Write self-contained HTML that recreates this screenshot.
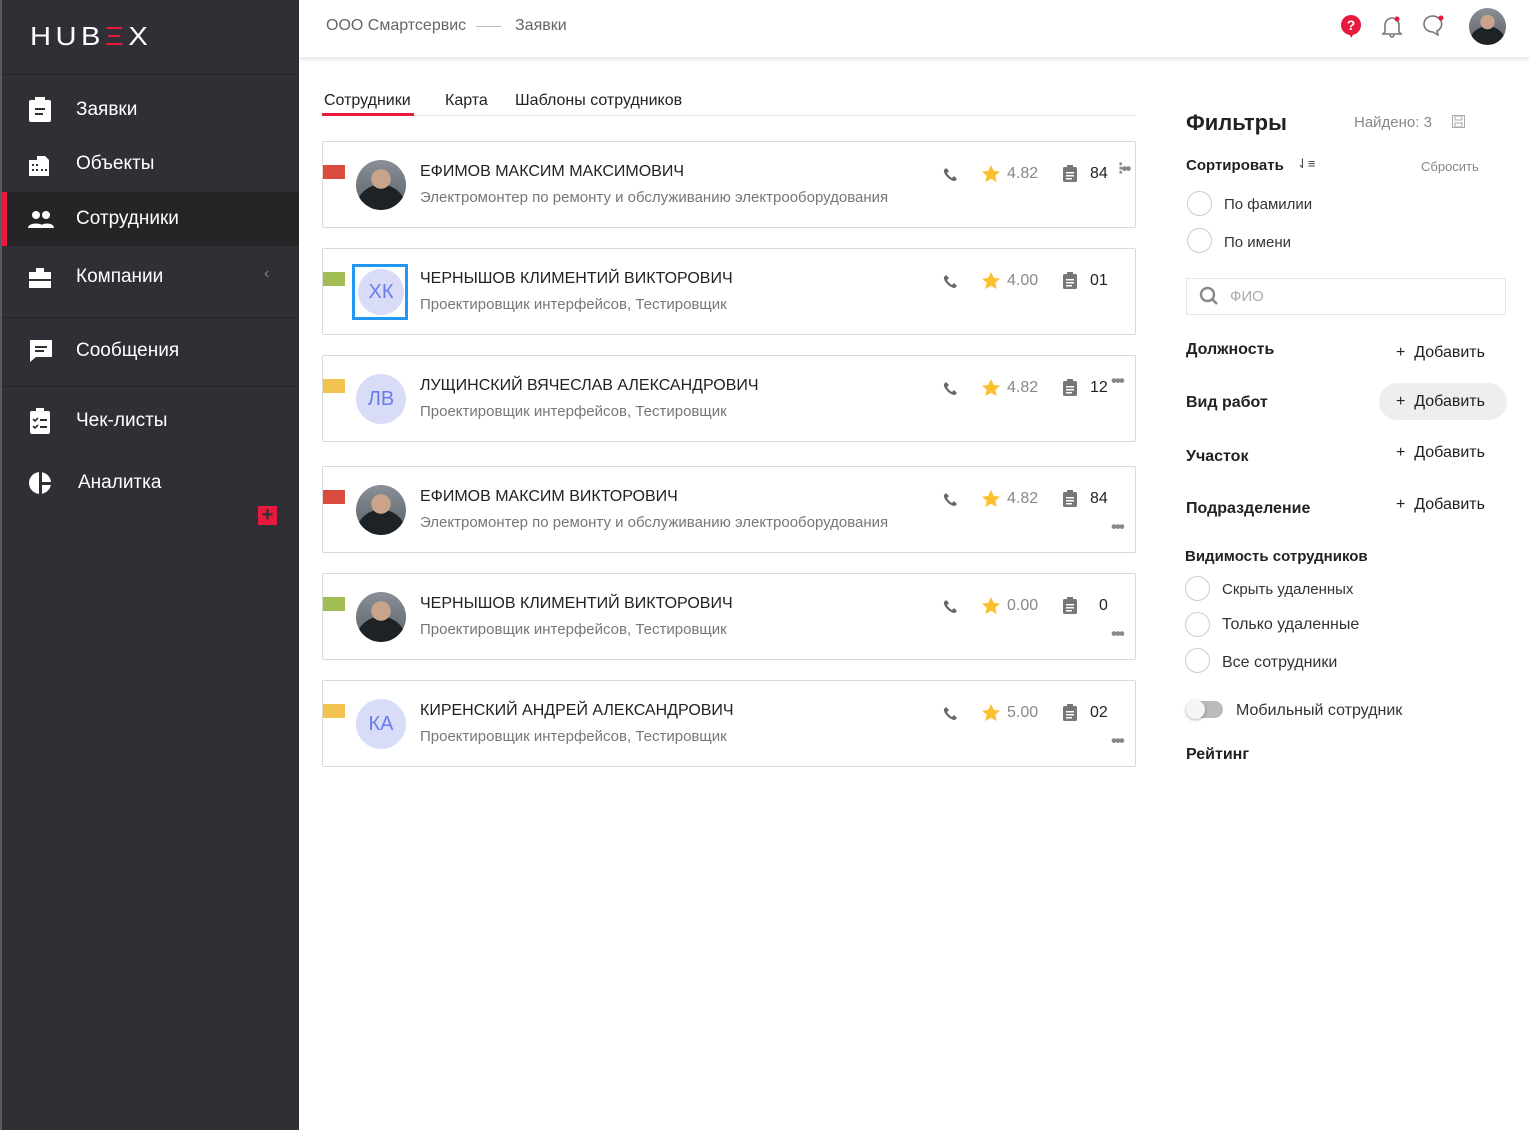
<!DOCTYPE html>
<html><head><meta charset="utf-8"><style>
*{margin:0;padding:0;box-sizing:border-box}
body{width:1530px;height:1130px;position:relative;background:#fff;font-family:"Liberation Sans",Roboto,sans-serif;overflow:hidden;color:#222}
.a{position:absolute}
#sb{left:0;top:0;width:299px;height:1130px;background:#302f36;border-left:2px solid #5b5a62}
.mi{position:absolute;left:0;width:297px;height:56px;color:#fff;font-size:19px}
.mi span{position:absolute;left:74px;top:50%;transform:translateY(-50%)}
.mi svg{position:absolute;left:26px;top:50%;transform:translateY(-50%)}
.sep{position:absolute;left:0;width:297px;height:1px;background:#252429}
.card{position:absolute;left:322px;width:814px;height:87px;border:1px solid #d9d9d9;border-radius:2px;background:#fff}
.mk{position:absolute;left:0;top:23px;width:22px;height:14px}
.av{position:absolute;left:33px;top:18px;width:50px;height:50px;border-radius:50%;background:#d8dcf7;color:#6a7bf0;font-size:20px;text-align:center;line-height:50px}
.ph{background:radial-gradient(circle at 50% 38%,#c9a48a 0 24%,transparent 25%),radial-gradient(circle at 50% 100%,#1d2226 0 45%,transparent 46%),linear-gradient(#8a9098,#5a6068)}
.nm{position:absolute;left:97px;top:21px;font-size:16px;color:#222}
.sub{position:absolute;left:97px;top:47px;font-size:15px;color:#777}
.tel{position:absolute;left:620px;top:25px}
.st{position:absolute;left:658px;top:22px}
.rt{position:absolute;left:684px;top:23px;font-size:16px;color:#888}
.cl{position:absolute;left:740px;top:23px}
.cn{position:absolute;left:767px;top:23px;font-size:16px;color:#222}
.dots{position:absolute;left:788px;font-size:17px;color:#888;letter-spacing:-2px;font-weight:bold}
.fl{position:absolute;left:1186px;font-size:16px;font-weight:bold;color:#222}
.add{position:absolute;left:1396px;font-size:16px;color:#222}
.rd{position:absolute;width:25px;height:25px;border:1px solid #ccc;border-radius:50%}
.rl{position:absolute;font-size:15px;color:#333}
</style></head><body>
<div id="sb" class="a">
 <div class="a" style="left:28px;top:21px;color:#fff;font-size:26px;letter-spacing:4px;font-weight:300;transform:scaleX(1.12);transform-origin:left">HUB<span style="color:#e8193f">Ξ</span>X</div>
 <div class="sep" style="top:74px"></div>
 <div class="mi" style="top:82px"><svg width="24" height="26"><rect x="1" y="3" width="22" height="22" rx="2" fill="#fff"/><rect x="7" y="0" width="10" height="5" fill="#fff"/><rect x="7" y="11" width="10" height="2" fill="#302f36"/><rect x="7" y="16" width="8" height="2" fill="#302f36"/></svg><span>Заявки</span></div>
 <div class="mi" style="top:136px"><svg width="24" height="24"><path d="M1 8h8V4h8l4 4v16H1z" fill="#fff"/><g fill="#302f36"><rect x="4" y="12" width="2" height="2"/><rect x="8" y="12" width="2" height="2"/><rect x="4" y="17" width="2" height="2"/><rect x="8" y="17" width="2" height="2"/><rect x="13" y="17" width="2" height="2"/><rect x="17" y="17" width="2" height="2"/></g></svg><span>Объекты</span></div>
 <div class="a" style="left:0;top:192px;width:297px;height:54px;background:#252528;border-left:5px solid #e8193f"></div>
 <div class="mi" style="top:192px;height:54px"><svg width="26" height="18"><circle cx="8" cy="5" r="4" fill="#fff"/><circle cx="18" cy="5" r="4" fill="#fff"/><path d="M0 18c0-6 16-6 16 0z M12 18c0-6 14-6 14 0z" fill="#fff"/></svg><span>Сотрудники</span></div>
 <div class="mi" style="top:249px"><svg width="24" height="22"><path d="M1 6h22v16H1z M8 2h8v4H8z" fill="#fff"/><rect x="1" y="13" width="22" height="2" fill="#302f36"/></svg><span>Компании</span><b style="position:absolute;left:262px;top:16px;color:#888;font-weight:normal;font-size:16px">‹</b></div>
 <div class="sep" style="top:317px"></div>
 <div class="mi" style="top:323px"><svg width="26" height="26"><path d="M2 2h22v17H8l-6 5z" fill="#fff"/><rect x="7" y="8" width="12" height="2" fill="#302f36"/><rect x="7" y="12" width="9" height="2" fill="#302f36"/></svg><span>Сообщения</span></div>
 <div class="sep" style="top:386px"></div>
 <div class="mi" style="top:393px"><svg width="24" height="26"><rect x="2" y="3" width="20" height="23" rx="2" fill="#fff"/><rect x="8" y="0" width="8" height="5" fill="#fff"/><path d="M5 11l2 2 3-3M5 18l2 2 3-3" stroke="#302f36" stroke-width="1.6" fill="none"/><rect x="12" y="11" width="7" height="2" fill="#302f36"/><rect x="12" y="18" width="7" height="2" fill="#302f36"/></svg><span>Чек-листы</span></div>
 <div class="mi" style="top:455px"><svg width="26" height="26"><circle cx="12" cy="13" r="11" fill="#fff"/><rect x="11" y="0" width="3" height="26" fill="#302f36"/><rect x="11" y="12" width="15" height="3" fill="#302f36"/></svg><span style="left:76px">Аналитка</span></div>
 <div class="a" style="left:256px;top:506px;width:19px;height:19px;background:#e8193f;color:#302f36;font-size:20px;line-height:18px;text-align:center;font-weight:bold">+</div>
</div>
<div class="a" style="left:299px;top:0;width:1231px;height:57px;background:#fff;box-shadow:0 2px 5px rgba(0,0,0,.12)"></div>
<div class="a" style="left:326px;top:17px;font-size:16px;color:#666">ООО Смартсервис</div>
<div class="a" style="left:476px;top:26px;width:25px;height:1px;background:#bbb"></div>
<div class="a" style="left:515px;top:17px;font-size:16px;color:#666">Заявки</div>
<svg class="a" style="left:1340px;top:14px" width="22" height="24"><circle cx="11" cy="11" r="10" fill="#e8193f"/><path d="M9 19l2 5 3-5z" fill="#e8193f"/><text x="11" y="16" font-size="14" font-weight="bold" fill="#fff" text-anchor="middle" font-family="Liberation Sans">?</text></svg>
<svg class="a" style="left:1381px;top:14px" width="22" height="24"><path d="M4 18V11a7 7 0 0114 0v7l2 2H2z M9 21a2 2 0 004 0" fill="none" stroke="#777" stroke-width="1.6"/><circle cx="16" cy="5" r="2.5" fill="#e8193f"/></svg>
<svg class="a" style="left:1422px;top:14px" width="24" height="22"><path d="M11 2a9 8 0 100 16l5 3-1-4a9 8 0 00-4-15z" fill="none" stroke="#777" stroke-width="1.6"/><circle cx="19" cy="4" r="2.5" fill="#e8193f"/></svg>
<div class="a ph" style="left:1469px;top:8px;width:37px;height:37px;border-radius:50%"></div>

<div class="a" style="left:324px;top:92px;font-size:16px;color:#222">Сотрудники</div>
<div class="a" style="left:445px;top:92px;font-size:16px;color:#222">Карта</div>
<div class="a" style="left:515px;top:92px;font-size:16px;color:#222">Шаблоны сотрудников</div>
<div class="a" style="left:322px;top:115px;width:814px;height:1px;background:#e3e3e3"></div>
<div class="a" style="left:322px;top:113px;width:92px;height:3px;background:#e8193f"></div>

<div class="card" style="top:141px"><div class="mk" style="background:#d94b3d"></div><div class="av ph"></div><div class="nm">ЕФИМОВ МАКСИМ МАКСИМОВИЧ</div><div class="sub">Электромонтер по ремонту и обслуживанию электрооборудования</div>
<svg class="tel" width="14" height="14"><path d="M3 1l3 3-2 2c1 2 3 4 5 5l2-2 3 3-2 2C7 14 0 7 1 3z" fill="#666"/></svg><svg class="st" width="20" height="19"><path d="M10 1l2.8 6 6.2.6-4.7 4.2 1.4 6.2L10 14.8 4.3 18l1.4-6.2L1 7.6l6.2-.6z" fill="#fbc02d"/></svg><div class="rt">4.82</div><svg class="cl" width="14" height="17"><rect x="0" y="2" width="14" height="15" rx="1.5" fill="#777"/><rect x="4" y="0" width="6" height="4" fill="#777"/><g fill="#fff"><rect x="3" y="7" width="8" height="1.5"/><rect x="3" y="10" width="8" height="1.5"/><rect x="3" y="13" width="6" height="1.5"/></g></svg><div class="cn">84</div><div class="dots" style="left:795px;top:17px">⁝••</div></div>

<div class="card" style="top:248px"><div class="mk" style="background:#a3bd55"></div><div class="a" style="left:29px;top:15px;width:56px;height:56px;border:3px solid #2196f3"></div><div class="av" style="left:35px;top:20px;width:46px;height:46px;line-height:46px">ХК</div><div class="nm">ЧЕРНЫШОВ КЛИМЕНТИЙ ВИКТОРОВИЧ</div><div class="sub">Проектировщик интерфейсов, Тестировщик</div>
<svg class="tel" width="14" height="14"><path d="M3 1l3 3-2 2c1 2 3 4 5 5l2-2 3 3-2 2C7 14 0 7 1 3z" fill="#666"/></svg><svg class="st" width="20" height="19"><path d="M10 1l2.8 6 6.2.6-4.7 4.2 1.4 6.2L10 14.8 4.3 18l1.4-6.2L1 7.6l6.2-.6z" fill="#fbc02d"/></svg><div class="rt">4.00</div><svg class="cl" width="14" height="17"><rect x="0" y="2" width="14" height="15" rx="1.5" fill="#777"/><rect x="4" y="0" width="6" height="4" fill="#777"/><g fill="#fff"><rect x="3" y="7" width="8" height="1.5"/><rect x="3" y="10" width="8" height="1.5"/><rect x="3" y="13" width="6" height="1.5"/></g></svg><div class="cn">01</div></div>

<div class="card" style="top:355px"><div class="mk" style="background:#f2c34e"></div><div class="av">ЛВ</div><div class="nm">ЛУЩИНСКИЙ ВЯЧЕСЛАВ АЛЕКСАНДРОВИЧ</div><div class="sub">Проектировщик интерфейсов, Тестировщик</div>
<svg class="tel" width="14" height="14"><path d="M3 1l3 3-2 2c1 2 3 4 5 5l2-2 3 3-2 2C7 14 0 7 1 3z" fill="#666"/></svg><svg class="st" width="20" height="19"><path d="M10 1l2.8 6 6.2.6-4.7 4.2 1.4 6.2L10 14.8 4.3 18l1.4-6.2L1 7.6l6.2-.6z" fill="#fbc02d"/></svg><div class="rt">4.82</div><svg class="cl" width="14" height="17"><rect x="0" y="2" width="14" height="15" rx="1.5" fill="#777"/><rect x="4" y="0" width="6" height="4" fill="#777"/><g fill="#fff"><rect x="3" y="7" width="8" height="1.5"/><rect x="3" y="10" width="8" height="1.5"/><rect x="3" y="13" width="6" height="1.5"/></g></svg><div class="cn">12</div><div class="dots" style="top:15px">•••</div></div>

<div class="card" style="top:466px"><div class="mk" style="background:#d94b3d"></div><div class="av ph"></div><div class="nm">ЕФИМОВ МАКСИМ ВИКТОРОВИЧ</div><div class="sub">Электромонтер по ремонту и обслуживанию электрооборудования</div>
<svg class="tel" width="14" height="14"><path d="M3 1l3 3-2 2c1 2 3 4 5 5l2-2 3 3-2 2C7 14 0 7 1 3z" fill="#666"/></svg><svg class="st" width="20" height="19"><path d="M10 1l2.8 6 6.2.6-4.7 4.2 1.4 6.2L10 14.8 4.3 18l1.4-6.2L1 7.6l6.2-.6z" fill="#fbc02d"/></svg><div class="rt">4.82</div><svg class="cl" width="14" height="17"><rect x="0" y="2" width="14" height="15" rx="1.5" fill="#777"/><rect x="4" y="0" width="6" height="4" fill="#777"/><g fill="#fff"><rect x="3" y="7" width="8" height="1.5"/><rect x="3" y="10" width="8" height="1.5"/><rect x="3" y="13" width="6" height="1.5"/></g></svg><div class="cn">84</div><div class="dots" style="top:50px">•••</div></div>

<div class="card" style="top:573px"><div class="mk" style="background:#a3bd55"></div><div class="av ph"></div><div class="nm">ЧЕРНЫШОВ КЛИМЕНТИЙ ВИКТОРОВИЧ</div><div class="sub">Проектировщик интерфейсов, Тестировщик</div>
<svg class="tel" width="14" height="14"><path d="M3 1l3 3-2 2c1 2 3 4 5 5l2-2 3 3-2 2C7 14 0 7 1 3z" fill="#666"/></svg><svg class="st" width="20" height="19"><path d="M10 1l2.8 6 6.2.6-4.7 4.2 1.4 6.2L10 14.8 4.3 18l1.4-6.2L1 7.6l6.2-.6z" fill="#fbc02d"/></svg><div class="rt">0.00</div><svg class="cl" width="14" height="17"><rect x="0" y="2" width="14" height="15" rx="1.5" fill="#777"/><rect x="4" y="0" width="6" height="4" fill="#777"/><g fill="#fff"><rect x="3" y="7" width="8" height="1.5"/><rect x="3" y="10" width="8" height="1.5"/><rect x="3" y="13" width="6" height="1.5"/></g></svg><div class="cn" style="left:776px">0</div><div class="dots" style="top:50px">•••</div></div>

<div class="card" style="top:680px"><div class="mk" style="background:#f2c34e"></div><div class="av">КА</div><div class="nm">КИРЕНСКИЙ АНДРЕЙ АЛЕКСАНДРОВИЧ</div><div class="sub">Проектировщик интерфейсов, Тестировщик</div>
<svg class="tel" width="14" height="14"><path d="M3 1l3 3-2 2c1 2 3 4 5 5l2-2 3 3-2 2C7 14 0 7 1 3z" fill="#666"/></svg><svg class="st" width="20" height="19"><path d="M10 1l2.8 6 6.2.6-4.7 4.2 1.4 6.2L10 14.8 4.3 18l1.4-6.2L1 7.6l6.2-.6z" fill="#fbc02d"/></svg><div class="rt">5.00</div><svg class="cl" width="14" height="17"><rect x="0" y="2" width="14" height="15" rx="1.5" fill="#777"/><rect x="4" y="0" width="6" height="4" fill="#777"/><g fill="#fff"><rect x="3" y="7" width="8" height="1.5"/><rect x="3" y="10" width="8" height="1.5"/><rect x="3" y="13" width="6" height="1.5"/></g></svg><div class="cn">02</div><div class="dots" style="top:50px">•••</div></div>

<div class="a" style="left:1186px;top:110px;font-size:22px;font-weight:bold;color:#222">Фильтры</div>
<div class="a" style="left:1354px;top:114px;font-size:15px;color:#888">Найдено: 3</div>
<svg class="a" style="left:1452px;top:115px" width="13" height="13"><rect x="0.5" y="0.5" width="12" height="12" fill="none" stroke="#aaa"/><rect x="3" y="1" width="7" height="4" fill="none" stroke="#aaa"/><rect x="3" y="8" width="7" height="4" fill="none" stroke="#aaa"/></svg>
<div class="fl" style="top:157px;font-size:15px">Сортировать</div>
<div class="a" style="left:1297px;top:156px;font-size:13px;color:#444">⇃≡</div>
<div class="a" style="left:1421px;top:159px;font-size:13px;color:#888">Сбросить</div>
<div class="rd" style="left:1187px;top:191px"></div><div class="rl" style="left:1224px;top:196px">По фамилии</div>
<div class="rd" style="left:1187px;top:228px"></div><div class="rl" style="left:1224px;top:234px">По имени</div>
<div class="a" style="left:1186px;top:278px;width:320px;height:37px;border:1px solid #e6e6e6"></div>
<svg class="a" style="left:1199px;top:286px" width="20" height="20"><circle cx="8.5" cy="8.5" r="6.5" fill="none" stroke="#888" stroke-width="2.4"/><path d="M13 13l5 5" stroke="#888" stroke-width="2.6"/></svg>
<div class="a" style="left:1230px;top:288px;font-size:15px;color:#aaa">ФИО</div>
<div class="fl" style="top:341px">Должность</div><div class="add" style="top:344px">+&nbsp; Добавить</div>
<div class="a" style="left:1379px;top:383px;width:128px;height:37px;border-radius:19px;background:#eee"></div>
<div class="fl" style="top:394px">Вид работ</div><div class="add" style="top:393px">+&nbsp; Добавить</div>
<div class="fl" style="top:448px">Участок</div><div class="add" style="top:444px">+&nbsp; Добавить</div>
<div class="fl" style="top:500px">Подразделение</div><div class="add" style="top:496px">+&nbsp; Добавить</div>
<div class="fl" style="left:1185px;top:548px;font-size:15px">Видимость сотрудников</div>
<div class="rd" style="left:1185px;top:576px"></div><div class="rl" style="left:1222px;top:581px">Скрыть удаленных</div>
<div class="rd" style="left:1185px;top:612px"></div><div class="rl" style="left:1222px;top:616px;font-size:16px">Только удаленные</div>
<div class="rd" style="left:1185px;top:648px"></div><div class="rl" style="left:1222px;top:654px;font-size:16px">Все сотрудники</div>
<div class="a" style="left:1186px;top:701px;width:37px;height:17px;border-radius:9px;background:#bbb"></div>
<div class="a" style="left:1186px;top:700px;width:19px;height:19px;border-radius:50%;background:#f5f5f5;box-shadow:0 1px 3px rgba(0,0,0,.3)"></div>
<div class="rl" style="left:1236px;top:702px;font-size:16px">Мобильный сотрудник</div>
<div class="fl" style="top:746px">Рейтинг</div>
</body></html>
